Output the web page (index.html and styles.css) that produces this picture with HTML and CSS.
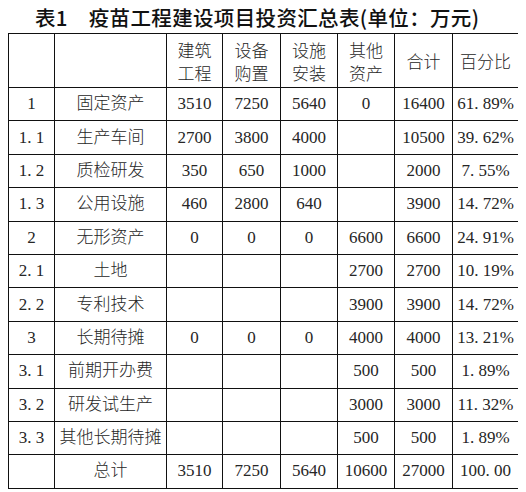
FILE: index.html
```html
<!DOCTYPE html>
<html lang="zh-CN">
<head>
<meta charset="utf-8">
<title>疫苗工程建设项目投资汇总表</title>
<link rel="stylesheet" href="styles.css">
</head>
<body>
<h1 class="title">表1　疫苗工程建设项目投资汇总表(单位：万元)</h1>
<table class="summary">
  <colgroup>
    <col class="c-no"><col class="c-name"><col class="c-a"><col class="c-b"><col class="c-c"><col class="c-d"><col class="c-e"><col class="c-f">
  </colgroup>
  <thead>
    <tr>
      <th></th><th></th>
      <th>建筑<br>工程</th>
      <th>设备<br>购置</th>
      <th>设施<br>安装</th>
      <th>其他<br>资产</th>
      <th>合计</th>
      <th>百分比</th>
    </tr>
  </thead>
  <tbody>
    <tr><td>1</td><td>固定资产</td><td>3510</td><td>7250</td><td>5640</td><td>0</td><td>16400</td><td>61<span class="pt">.</span>89%</td></tr>
    <tr><td>1<span class="pt">.</span>1</td><td>生产车间</td><td>2700</td><td>3800</td><td>4000</td><td></td><td>10500</td><td>39<span class="pt">.</span>62%</td></tr>
    <tr><td>1<span class="pt">.</span>2</td><td>质检研发</td><td>350</td><td>650</td><td>1000</td><td></td><td>2000</td><td>7<span class="pt">.</span>55%</td></tr>
    <tr><td>1<span class="pt">.</span>3</td><td>公用设施</td><td>460</td><td>2800</td><td>640</td><td></td><td>3900</td><td>14<span class="pt">.</span>72%</td></tr>
    <tr><td>2</td><td>无形资产</td><td>0</td><td>0</td><td>0</td><td>6600</td><td>6600</td><td>24<span class="pt">.</span>91%</td></tr>
    <tr><td>2<span class="pt">.</span>1</td><td>土地</td><td></td><td></td><td></td><td>2700</td><td>2700</td><td>10<span class="pt">.</span>19%</td></tr>
    <tr><td>2<span class="pt">.</span>2</td><td>专利技术</td><td></td><td></td><td></td><td>3900</td><td>3900</td><td>14<span class="pt">.</span>72%</td></tr>
    <tr><td>3</td><td>长期待摊</td><td>0</td><td>0</td><td>0</td><td>4000</td><td>4000</td><td>13<span class="pt">.</span>21%</td></tr>
    <tr><td>3<span class="pt">.</span>1</td><td>前期开办费</td><td></td><td></td><td></td><td>500</td><td>500</td><td>1<span class="pt">.</span>89%</td></tr>
    <tr><td>3<span class="pt">.</span>2</td><td>研发试生产</td><td></td><td></td><td></td><td>3000</td><td>3000</td><td>11<span class="pt">.</span>32%</td></tr>
    <tr><td>3<span class="pt">.</span>3</td><td>其他长期待摊</td><td></td><td></td><td></td><td>500</td><td>500</td><td>1<span class="pt">.</span>89%</td></tr>
    <tr><td></td><td>总计</td><td>3510</td><td>7250</td><td>5640</td><td>10600</td><td>27000</td><td>100<span class="pt">.</span>00</td></tr>
  </tbody>
</table>
</body>
</html>
```

FILE: styles.css
```css
html, body {
  background: #ffffff;
}

body {
  margin: 6px 8px 8px 8px;
  color: #262626;
  font-family: "Liberation Serif", "Noto Sans CJK SC", serif;
}

.title {
  margin: 0 0 5px 0;
  padding-left: 27px;
  font-family: "Noto Sans CJK SC", sans-serif;
  font-size: 20.5px;
  line-height: 22px;
  font-weight: 500;
  letter-spacing: 0.35px;
  color: #111111;
  white-space: nowrap;
}

.summary {
  border-collapse: collapse;
  table-layout: fixed;
  width: 511px;
  font-size: 17px;
  font-weight: 300;
}

.summary .c-no { width: 46px; }
.summary .c-name { width: 112px; }
.summary .c-a { width: 56px; }
.summary .c-b { width: 58px; }
.summary .c-c { width: 57px; }
.summary .c-d { width: 57px; }
.summary .c-e { width: 58px; }
.summary .c-f { width: 66px; }

.summary th,
.summary td {
  border: 1px solid #111111;
  padding: 0;
  text-align: center;
  vertical-align: middle;
  white-space: nowrap;
  font-weight: 300;
}

.summary th {
  height: 53px;
  line-height: 23px;
  font-family: "Noto Sans CJK SC", sans-serif;
}

.summary td {
  height: 32.4px;
  line-height: 20px;
}

.pt {
  display: inline-block;
  width: 0.5em;
  text-align: left;
}
```
